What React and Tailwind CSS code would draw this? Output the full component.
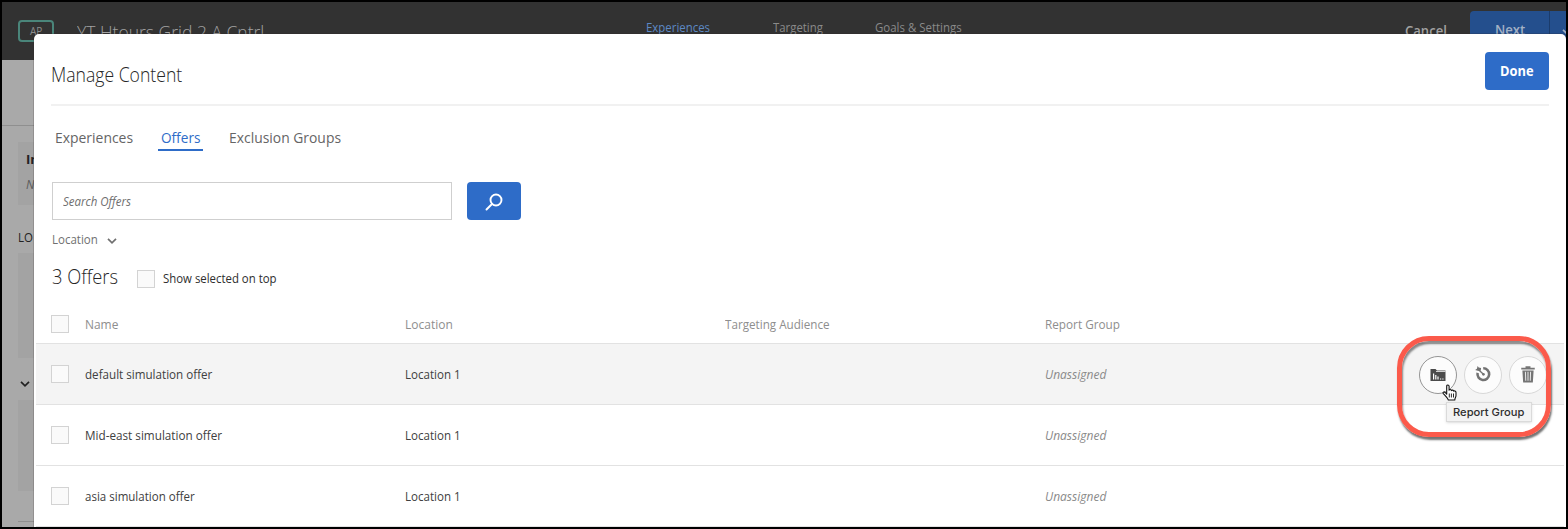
import { useLayoutEffect, useRef, useState } from "react";

/* One line of text whose glyphs are condensed to fill the width of its box. */
function Line({ className = "", children }) {
  const inner = useRef(null);
  const [scale, setScale] = useState(1);
  useLayoutEffect(() => {
    const fit = () =>
      setScale(inner.current.parentElement.clientWidth / inner.current.offsetWidth);
    fit();
    document.fonts.ready.then(fit);
  }, []);
  return (
    <div className={`shrink-0 whitespace-nowrap ${className}`}>
      <span
        ref={inner}
        className="inline-block origin-left"
        style={{ transform: `scaleX(${scale})` }}
      >
        {children}
      </span>
    </div>
  );
}

function Checkbox({ className = "" }) {
  return (
    <span
      role="checkbox"
      aria-checked="false"
      className={`block size-[18px] shrink-0 border border-[#d3d3d3] bg-[#fafafa] ${className}`}
    />
  );
}

function Chevron({ className = "" }) {
  return (
    <svg viewBox="0 0 10 8" className={className} fill="none" stroke="currentColor" strokeWidth="1.7">
      <path d="M1 1.8 5 5.8 9 1.8" />
    </svg>
  );
}

function AppBehind() {
  return (
    <div className="flex h-full flex-col bg-[#a9a9a9]">
      <header className="flex h-[58px] shrink-0 items-start bg-[#323232]">
        <div className="mt-[18px] ml-4 flex h-[22px] w-9 items-center justify-center rounded border-2 border-[#4a857a]">
          <Line className="w-3 text-[10px] leading-3 text-[#8c8c8c]">AP</Line>
        </div>
        <Line className="mt-[18px] ml-[23px] w-[187px] text-[19px] leading-6 font-light text-[#a3a3a3]">
          YT Htours Grid 2 A Cntrl
        </Line>
        <nav className="mt-[18px] ml-[382px] flex h-4 text-[12.5px] leading-4 text-[#8a8a8a]">
          <Line className="w-[64px] text-[#5d89c4]">Experiences</Line>
          <Line className="ml-[63px] w-[50px]">Targeting</Line>
          <Line className="ml-[52px] w-[87px]">Goals &amp; Settings</Line>
        </nav>
        <Line className="mt-[19px] ml-[443px] w-[42px] text-[14px] leading-5 font-semibold text-[#a3a3a3]">
          Cancel
        </Line>
        <div className="mt-[9px] ml-[23px] flex h-[38px] flex-1 overflow-hidden rounded-l bg-[#244f8d] text-[#a3b1c5]">
          <div className="flex w-20 shrink-0 items-center border-r border-[#1b3c6c] pl-[25px]">
            <Line className="w-[30px] text-[14px] leading-5 font-semibold">Next</Line>
          </div>
          <Chevron className="mt-[17px] ml-3 h-2 w-2.5 shrink-0" />
        </div>
      </header>
      <div className="flex h-[66px] shrink-0 border-b border-[#8f8f8f]" />
      <div className="flex w-8 flex-col overflow-hidden pl-4 text-[#222]">
        <div className="mt-4 h-[63px] bg-[#a3a3a3] pt-2 pl-2">
          <p className="text-[13px] leading-[18px] font-bold">In</p>
          <p className="mt-2 text-[12px] leading-[18px] text-[#5c5c5c] italic">N</p>
        </div>
        <Line className="mt-[22px] w-[15px] text-[13px] leading-5">LO</Line>
        <div className="mt-[6px] h-[105px] bg-[#a3a3a3]" />
        <div className="flex h-[42px] items-center pt-2">
          <Chevron className="mt-px ml-[2px] h-2 w-2.5" />
        </div>
        <div className="h-[91px] bg-[#a3a3a3]" />
        <div className="mt-[30px] border-t border-[#8f8f8f]" />
      </div>
    </div>
  );
}

function ReportGroupIcon() {
  return (
    <svg viewBox="0 0 16 14" className="-ml-px h-3.5 w-4">
      <path fill="#4b4b4b" d="M.5 1h5l1.500 1.500H15.500V13H.5z" />
      <path fill="#fff" d="M6 3h9.500v.8H6zM3 5.500h1.200v6H3zM5.200 7h1.200v4.500H5.200zM7.400 8.500h1.200v3H7.400zM10 10.500h1.200v1H10zM12.300 10.500h1.200v1h-1.200z" />
    </svg>
  );
}

function TargetIcon() {
  return (
    <svg viewBox="0 0 16 16" className="-mt-px -ml-px size-[18px]">
      <path d="M8.2 2.900A5.200 5.200 0 1 1 3.200 7" fill="none" stroke="#727272" strokeWidth="2.300" />
      <path d="M3.300 3.500 8.400 8.300" stroke="#727272" strokeWidth="1.200" />
      <circle cx="8.400" cy="8.300" r="1.200" fill="#727272" />
      <path d="M3.200.8 4.200 2.200 6.300 2.600 6 5 3.300 5.100 1 4.500 2.600 3.400z" fill="#727272" />
    </svg>
  );
}

function TrashIcon() {
  return (
    <svg viewBox="0 0 14 16" className="-mt-px -ml-px h-[18px] w-4">
      <path fill="#747474" d="M4.800 1h4.400v1.500H13V4H1V2.500h3.800zM2 4.800h10L11.300 15.500H2.700z" />
      <path stroke="#f6f6f6" strokeWidth=".8" d="M4.700 6 5 14M7 6v8M9.300 6 9 14" />
    </svg>
  );
}

function HandCursor() {
  return (
    <svg viewBox="0 0 16 17" className="h-[17px] w-4">
      <path
        d="M4.700 10.200V2.200C4.700.5 7 .5 7.100 2.200V6.200C7.300 5.300 9.200 5.300 9.400 6.600 9.700 5.800 11.500 6 11.700 7.200 12.200 6.500 14 6.900 14 8.500V11.500C14 13 13 13.500 12.800 16H6.200C6 14.300 3.500 12 1.300 9.600.4 8.300 2 7.300 3.200 8.500z"
        fill="#fff"
        stroke="#111"
        strokeWidth="1.100"
        strokeLinejoin="round"
      />
      <path d="M7.300 9.500v4M9.400 9.500v4M11.500 9.500v4" stroke="#111" strokeWidth=".9" />
    </svg>
  );
}

function RowActions() {
  const base = "flex size-[38px] items-center justify-center rounded-full border bg-[#fcfcfc]";
  return (
    <div className="relative mt-px ml-auto flex gap-[7px] pr-[17px]">
      <button className={`${base} border-[#959595]`}><ReportGroupIcon /></button>
      <button className={`${base} border-[#d8d8d8]`}><TargetIcon /></button>
      <button className={`${base} border-[#d8d8d8]`}><TrashIcon /></button>
      <div className="absolute top-[46px] left-[27px] z-10 flex h-5 w-[86px] items-center border border-[#dadada] bg-[#f3f3f3] pl-[6px] shadow">
        <Line className="w-[71px] font-['Inter',sans-serif] text-[11px] leading-4 text-[#2e2e2e]">
          Report Group
        </Line>
      </div>
      <div className="absolute -top-[20px] -left-[22px] h-[101px] w-[154px] rounded-[32px] border-[5px] border-[#fb5a4b] shadow-[1px_3px_2px_rgba(0,0,0,.55),inset_1px_3px_2px_rgba(0,0,0,.45)]" />
      <div className="absolute top-[28px] left-[23px] z-20"><HandCursor /></div>
    </div>
  );
}

const columns = "grid grid-cols-[34px_320px_320px_320px_1fr] items-center pl-[15px]";

function OfferRow({ name, width, active }) {
  return (
    <div className={`${columns} h-[61px] border-b border-[#e2e2e2] text-[13px] leading-[18px] font-[450] text-[#404040] ${active ? "bg-[#f4f4f4]" : "bg-white"}`}>
      <Checkbox className="-mt-px" />
      <Line className={width}>{name}</Line>
      <Line className="w-[56px]">Location 1</Line>
      <div />
      <div className="flex items-center">
        <Line className="w-[61px] text-[#8a8a8a] italic">Unassigned</Line>
        {active && <RowActions />}
      </div>
    </div>
  );
}

function ManageContent() {
  return (
    <div className="absolute top-8 right-0 bottom-0 left-8 overflow-hidden rounded-t-[5px] bg-white shadow-[0_0_0_1px_rgba(45,35,35,.18)]">
      <div className="mr-[17px] ml-[17px] flex h-[72px] items-center justify-between border-b-2 border-[#f1f1f1]">
        <Line className="mt-3 w-[131px] text-[19.5px] leading-6 font-[330] text-[#262626]">Manage Content</Line>
        <button className="mt-1 flex h-[38px] w-16 items-center justify-center rounded bg-[#2e6cc8] text-white">
          <Line className="w-[34px] text-left text-[14px] leading-5 font-bold">Done</Line>
        </button>
      </div>
      <nav className="flex h-[45px] items-end pl-[21px] text-[15px] leading-5 text-[#656565]">
        <Line className="mb-[4px] w-[78px]">Experiences</Line>
        <div className="ml-[25px] w-[45px] border-b-2 border-[#2e6cc8] px-[3px] pb-[2px]">
          <Line className="w-[39px] font-medium text-[#2e6cc8]">Offers</Line>
        </div>
        <Line className="mb-[4px] ml-[26px] w-[112px]">Exclusion Groups</Line>
      </nav>
      <div className="mt-[31px] flex gap-[15px] pl-[18px]">
        <div className="flex h-[38px] w-[400px] items-center border border-[#cfcfcf] pl-[10px]">
          <Line className="w-[68px] text-[13px] leading-[18px] text-[#6e6e6e] italic">Search Offers</Line>
        </div>
        <button className="flex h-[38px] w-[54px] items-center justify-center rounded bg-[#2e6cc8]">
          <svg viewBox="0 0 18 18" className="mt-px size-[18px]" fill="none" stroke="#fff" strokeWidth="1.900" strokeLinecap="round">
            <circle cx="11" cy="7" r="5.500" />
            <path d="M7 11 1.500 16.500" />
          </svg>
        </button>
      </div>
      <div className="mt-[10px] flex h-[18px] items-center pl-[18px] text-[13px] leading-[18px] text-[#707070]">
        <Line className="w-[46px]">Location</Line>
        <Chevron className="mt-1 ml-[9px] h-2 w-2.5" />
      </div>
      <div className="mt-[15px] flex h-7 items-center pl-[18px]">
        <Line className="w-[66px] text-[20px] leading-7 font-[330] text-[#262626]">3 Offers</Line>
        <Checkbox className="mt-1 ml-[19px]" />
        <Line className="mt-[2px] ml-[8px] w-[114px] text-[13px] leading-[18px] font-[450] text-[#2e2e2e]">Show selected on top</Line>
      </div>
      <div className="mr-0.5 ml-0.5">
        <div className={`${columns} h-[53px] border-b border-[#e2e2e2] pt-[13px] text-[13px] leading-[18px] text-[#8e8e8e]`}>
          <Checkbox />
          <Line className="w-[33px]">Name</Line>
          <Line className="w-[48px]">Location</Line>
          <Line className="w-[105px]">Targeting Audience</Line>
          <Line className="w-[75px]">Report Group</Line>
        </div>
        <OfferRow name="default simulation offer" width="w-[127px]" active />
        <OfferRow name="Mid-east simulation offer" width="w-[137px]" />
        <OfferRow name="asia simulation offer" width="w-[110px]" />
      </div>
    </div>
  );
}

export default function App() {
  return (
    <main className="h-[529px] w-[1568px] overflow-hidden bg-black p-0.5 font-['Open_Sans','Noto_Sans',sans-serif]">
      <div className="relative h-[525px] w-[1564px] overflow-hidden">
        <AppBehind />
        <ManageContent />
      </div>
    </main>
  );
}
